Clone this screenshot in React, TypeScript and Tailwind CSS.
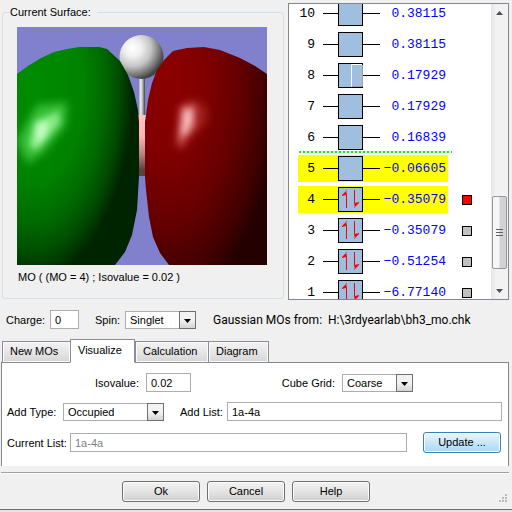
import { useState } from "react";

const orbitals = [
    { id: 10, energy: "0.38115" },
    { id: 9, energy: "0.38115" },
    { id: 8, energy: "0.17929", cursor: true },
    { id: 7, energy: "0.17929" },
    { id: 6, energy: "0.16839", lumo: true },
    { id: 5, energy: "−0.06605", selected: true },
    { id: 4, energy: "−0.35079", selected: true, filled: true, marker: "bg-[#ff0000]" },
    { id: 3, energy: "−0.35079", filled: true, marker: "bg-[#c0c0c0]" },
    { id: 2, energy: "−0.51254", filled: true, marker: "bg-[#c0c0c0]" },
    { id: 1, energy: "−6.77140", filled: true, marker: "bg-[#c0c0c0]" },
];

const tabs = ["New MOs", "Visualize", "Calculation", "Diagram"];
const tabWidths = ["w-[69px]", "w-[65px]", "w-[74px]", "w-[61px]"];

function Surface() {
    return (
        <svg viewBox="0 0 250 238" preserveAspectRatio="xMidYMid slice" className="block w-full h-[238px] bg-[#8080cc]" role="img" aria-label="Molecular orbital surface">
            <defs>
                <radialGradient id="green" gradientUnits="userSpaceOnUse" cx="0" cy="0" r="1" gradientTransform="translate(16 58) scale(100 195)">
                    <stop offset="0" stopColor="#008c00" />
                    <stop offset="0.5" stopColor="#008200" />
                    <stop offset="0.72" stopColor="#006800" />
                    <stop offset="0.87" stopColor="#004a00" />
                    <stop offset="1" stopColor="#002300" />
                </radialGradient>
                <radialGradient id="red" gradientUnits="userSpaceOnUse" cx="0" cy="0" r="1" gradientTransform="translate(150 50) scale(112 228)">
                    <stop offset="0" stopColor="#8c0000" />
                    <stop offset="0.35" stopColor="#800000" />
                    <stop offset="0.65" stopColor="#640000" />
                    <stop offset="0.88" stopColor="#400000" />
                    <stop offset="1" stopColor="#240000" />
                </radialGradient>
                <radialGradient id="ball" cx="0.3" cy="0.3" r="0.76">
                    <stop offset="0" stopColor="#ffffff" />
                    <stop offset="0.25" stopColor="#f0f0f0" />
                    <stop offset="0.55" stopColor="#c4c4c4" />
                    <stop offset="0.82" stopColor="#707070" />
                    <stop offset="0.95" stopColor="#444444" />
                </radialGradient>
                <linearGradient id="stick">
                    <stop offset="0" stopColor="#a8a8a8" />
                    <stop offset="0.3" stopColor="#f0f0f0" />
                    <stop offset="0.6" stopColor="#b0b0b0" />
                    <stop offset="1" stopColor="#404040" />
                </linearGradient>
                <linearGradient id="boron" x1="0" y1="0" x2="0" y2="1">
                    <stop offset="0" stopColor="#ffc4c4" />
                    <stop offset="0.35" stopColor="#ffb4b4" />
                    <stop offset="0.65" stopColor="#b88080" />
                    <stop offset="0.9" stopColor="#5c4040" />
                    <stop offset="1" stopColor="#5c4040" />
                </linearGradient>
                <filter id="soft3" x="-50%" y="-50%" width="200%" height="200%"><feGaussianBlur stdDeviation="3" /></filter>
                <filter id="soft5" x="-50%" y="-50%" width="200%" height="200%"><feGaussianBlur stdDeviation="4" /></filter>
            </defs>
            <rect x="122" y="48" width="6" height="42" fill="url(#stick)" />
            <rect x="121" y="88" width="8" height="61" fill="url(#boron)" />
            <circle cx="124.5" cy="30" r="22" fill="url(#ball)" />
            <path d="M0 47 L11 39 L24 31 L37 25 L50 22 L62 20 L82 20 L90 22 L103 34 L111 48 L117 65 L121 83 L122 95 L122 150 L120 183 L115 208 L108 225 L98 238 L0 238 Z" fill="url(#green)" />
            <path d="M128 95 L131 73 L135 56 L140 43 L147 33 L156 24 L170 21 L187 20 L203 23 L223 31 L238 39 L250 47 L250 238 L152 238 L143 226 L136 210 L132 190 L129 163 L128 150 Z" fill="url(#red)" />
            <path d="M0 113 L20 78 L50 75 L49 98 L26 126 L11 137 L4 124 Z" fill="#50d450" opacity="0.7" filter="url(#soft5)" />
            <path d="M12 118 L18 94 L42 84 L43 96 L29 113 L18 124 Z" fill="#98f898" opacity="0.8" filter="url(#soft3)" />
            <path d="M20 98 L32 94 L28 108 L19 118 Z" fill="#d4ffd0" opacity="0.9" filter="url(#soft3)" />
            <path d="M158 118 L161 80 L174 72 L190 80 L190 95 L176 108 L166 123 Z" fill="#c04040" opacity="0.5" filter="url(#soft5)" />
            <path d="M161 111 L164 79 L179 77 L179 100 L168 112 L163 120 Z" fill="#d46464" opacity="0.75" filter="url(#soft3)" />
            <path d="M167 83 L175 82 L175 95 L169 107 L164 109 Z" fill="#ffc4c4" opacity="0.95" filter="url(#soft3)" />
        </svg>
    );
}

function OrbitalBox({ filled, cursor }: { filled?: boolean; cursor?: boolean }) {
    return (
        <svg viewBox="0 0 25 25" className="block w-[25px] h-[25px] flex-none" aria-hidden="true">
            <rect x="0.5" y="0.5" width="24" height="24" fill="#a0bede" stroke="#000" />
            {cursor && (
                <g fill="none">
                    <path d="M24.5 2 V23.5 H14" stroke="#a0a0a0" />
                    <path d="M13.5 23.5 V1.5 H24" stroke="#fff" />
                </g>
            )}
            {filled && (
                <g fill="#ff0000">
                    <path d="M8 3 H9 V21 H8 Z M9 3 L4 8 V9 L8 8 Z" />
                    <path d="M16 3 H17 V21 H16 Z M16 21 L21 16 V15 L17 16 Z" />
                </g>
            )}
        </svg>
    );
}

function Scrollbar() {
    return (
        <div className="w-[17px] flex-none flex flex-col items-center bg-gradient-to-r from-[#e6e6e6] to-[#f2f2f2] to-30%" aria-hidden="true">
            <svg viewBox="0 0 17 17" className="w-[17px] h-[17px]"><path d="M5 11 L8.500 7 L12 11 Z" fill="#505050" /></svg>
            <div className="mt-[175px] w-[15px] h-[73px] rounded-[2px] border border-[#979797] bg-gradient-to-r from-[#f6f6f6] from-45% to-[#d2d2d6] to-55% flex flex-col items-center justify-center gap-[2px]">
                <i className="block w-[7px] h-px bg-[#606060]" />
                <i className="block w-[7px] h-px bg-[#606060]" />
                <i className="block w-[7px] h-px bg-[#606060]" />
            </div>
            <svg viewBox="0 0 17 17" className="mt-auto w-[17px] h-[17px]"><path d="M5 7 L8.500 11 L12 7 Z" fill="#505050" /></svg>
        </div>
    );
}

function Picker({ id, options, width }: { id: string; options: string[]; width: string }) {
    return (
        <span className={`relative block h-[18px] ${width}`}>
            <select id={id} className="block w-full h-full appearance-none border border-[#abadb3] bg-white pl-1 pb-[2px] outline-none">
                {options.map((o) => <option key={o}>{o}</option>)}
            </select>
            <span className="absolute right-0 top-0 w-[17px] h-[18px] border border-[#707070] bg-gradient-to-b from-[#f2f2f2] from-50% to-[#d4d4d4] flex items-center justify-center pointer-events-none">
                <svg viewBox="0 0 7 4" className="w-[7px] h-[4px] mt-[3px]"><path d="M0 0 H7 L3.500 4 Z" fill="#000" /></svg>
            </span>
        </span>
    );
}

const field = "block h-[19px] border border-[#abadb3] bg-white px-1 outline-none disabled:text-[#808080]";
const button = "w-[78px] h-[21px] rounded-[3px] border text-center pb-[2px] shadow-[inset_0_0_0_1px_#fcfcfc]";
const grayButton = "border-[#707070] bg-gradient-to-b from-[#f2f2f2] via-[#e4e4e4] to-[#cfcfcf]";

export default function App() {
    const [active, setActive] = useState("Visualize");

    return (
        <main className="min-h-screen bg-[#e4e4e4] font-['Liberation_Sans',Arial,sans-serif] text-[11px] leading-4 text-black">
            <div className="bg-[#f0f0f0] border-b border-[#6d6d6d] pt-[3px] pb-[7px] pr-[3px]">
                <div className="flex pl-[2px]">
                    <fieldset className="flex-1 min-w-0 mt-px mb-px border border-[#d5dfe5] rounded-[3px] pl-[14px] pr-4">
                        <legend className="-ml-2 pl-px w-[88px]">Current Surface:</legend>
                        <div className="pt-[7px]">
                            <Surface />
                            <p className="mt-1 pl-px">MO ( (MO = 4) ; Isovalue = 0.02 )</p>
                        </div>
                    </fieldset>
                    <section className="w-[221px] flex-none ml-1 h-[297px] border border-[#828790] bg-white flex overflow-hidden" aria-label="Molecular orbitals">
                        <ol className="flex-1 -mt-1.5">
                            {orbitals.map((o) => (
                                <li key={o.id}>
                                    <div className="h-[31px] flex items-center pl-[9px]">
                                        <div className={`w-[150px] h-[27px] flex items-center font-['Liberation_Mono','Courier_New',monospace] text-[13px] ${o.selected ? "bg-[#ffff00]" : ""}`}>
                                            <span className="w-[17px] text-right">{o.id}</span>
                                            <i className="ml-2 w-[15px] h-px bg-black" />
                                            <OrbitalBox filled={o.filled} cursor={o.cursor} />
                                            <i className="w-[17px] h-px bg-black" />
                                            <span className="flex-1 text-right pr-[2px] text-[#0000ff]">{o.energy}</span>
                                        </div>
                                        {o.marker && <i className={`ml-[14px] w-[10px] h-[10px] border border-black ${o.marker}`} />}
                                    </div>
                                    {o.lumo && (
                                        <div className="-mt-[2px] ml-[10px] w-[153px] h-[2px] bg-[repeating-linear-gradient(90deg,#00ff00_0_2px,transparent_2px_4px)]" />
                                    )}
                                </li>
                            ))}
                        </ol>
                        <Scrollbar />
                    </section>
                </div>

                <div className="mt-[10px] flex items-center h-[19px] pl-[6px]">
                    <label htmlFor="charge" className="w-[44px]">Charge:</label>
                    <input id="charge" defaultValue="0" className={`${field} w-[29px]`} />
                    <label htmlFor="spin" className="ml-4 w-[30px]">Spin:</label>
                    <Picker id="spin" options={["Singlet", "Doublet", "Triplet"]} width="w-[71px]" />
                    <p className="ml-[17px] font-['Roboto','Segoe_UI',sans-serif] text-[12px] whitespace-pre">Gaussian MOs from:  H:\3rdyearlab\bh3_mo.chk</p>
                </div>

                <div className="mt-[10px] pl-px">
                    <div role="tablist" className="flex items-end h-[24px] -mb-px pl-px">
                        {tabs.map((t, i) => (
                            <button
                                key={t}
                                role="tab"
                                aria-selected={t === active}
                                onClick={() => setActive(t)}
                                className={`${tabWidths[i]} border border-[#8b8c95] text-left pl-[7px] ${t === active ? "relative h-[24px] bg-white border-b-white pb-[2px]" : "h-[22px] -mr-px pb-[2px] bg-gradient-to-b from-[#f3f3f3] via-[#e6e6e6] to-[#d6d6d6] shadow-[inset_0_0_0_1px_#fafafa]"}`}
                            >
                                {t}
                            </button>
                        ))}
                    </div>
                    <div role="tabpanel" className="bg-white border border-b-0 border-[#828790] pt-[10px] pb-[14px] pl-[5px] pr-[6px] flex flex-col">
                        <div className="flex items-center h-[19px]">
                            <label htmlFor="iso" className="w-[132px] text-right">Isovalue:</label>
                            <input id="iso" defaultValue="0.02" className={`${field} ml-[7px] w-[45px]`} />
                            <label htmlFor="grid" className="w-[144px] text-right mr-[7px]">Cube Grid:</label>
                            <Picker id="grid" options={["Coarse", "Medium", "Fine"]} width="w-[71px]" />
                        </div>
                        <div className="mt-[10px] flex items-center h-[19px]">
                            <label htmlFor="type" className="w-[56px]">Add Type:</label>
                            <Picker id="type" options={["Occupied", "Virtual", "All"]} width="w-[101px]" />
                            <label htmlFor="list" className="ml-4 w-[47px]">Add List:</label>
                            <input id="list" defaultValue="1a-4a" className={`${field} flex-1 min-w-0`} />
                        </div>
                        <div className="mt-3 flex items-center h-[19px]">
                            <label htmlFor="current" className="w-[63px]">Current List:</label>
                            <input id="current" defaultValue="1a-4a" disabled className={`${field} flex-1 min-w-0`} />
                            <button className={`${button} ml-4 mr-px border-[#3c7fb1] bg-gradient-to-b from-[#eaf6fd] via-[#c8e8fa] to-[#a7d9f5]`}>Update ...</button>
                        </div>
                    </div>
                </div>

                <hr className="mt-[6px] ml-px border-t border-[#a0a0a0]" />
                <div className="flex items-center pt-[7px] pl-[122px] gap-[7px] border-t border-white">
                    <button className={`${button} ${grayButton}`}>Ok</button>
                    <button className={`${button} ${grayButton}`}>Cancel</button>
                    <button className={`${button} ${grayButton}`}>Help</button>
                    <svg viewBox="0 0 8 8" className="ml-auto mr-[2px] mt-3 w-[8px] h-[8px]" fill="#b8b8b8" aria-hidden="true">
                        <path d="M6 0h2v2h-2z M3 3h2v2h-2z M6 3h2v2h-2z M0 6h2v2h-2z M3 6h2v2h-2z M6 6h2v2h-2z" />
                    </svg>
                </div>
            </div>
        </main>
    );
}
